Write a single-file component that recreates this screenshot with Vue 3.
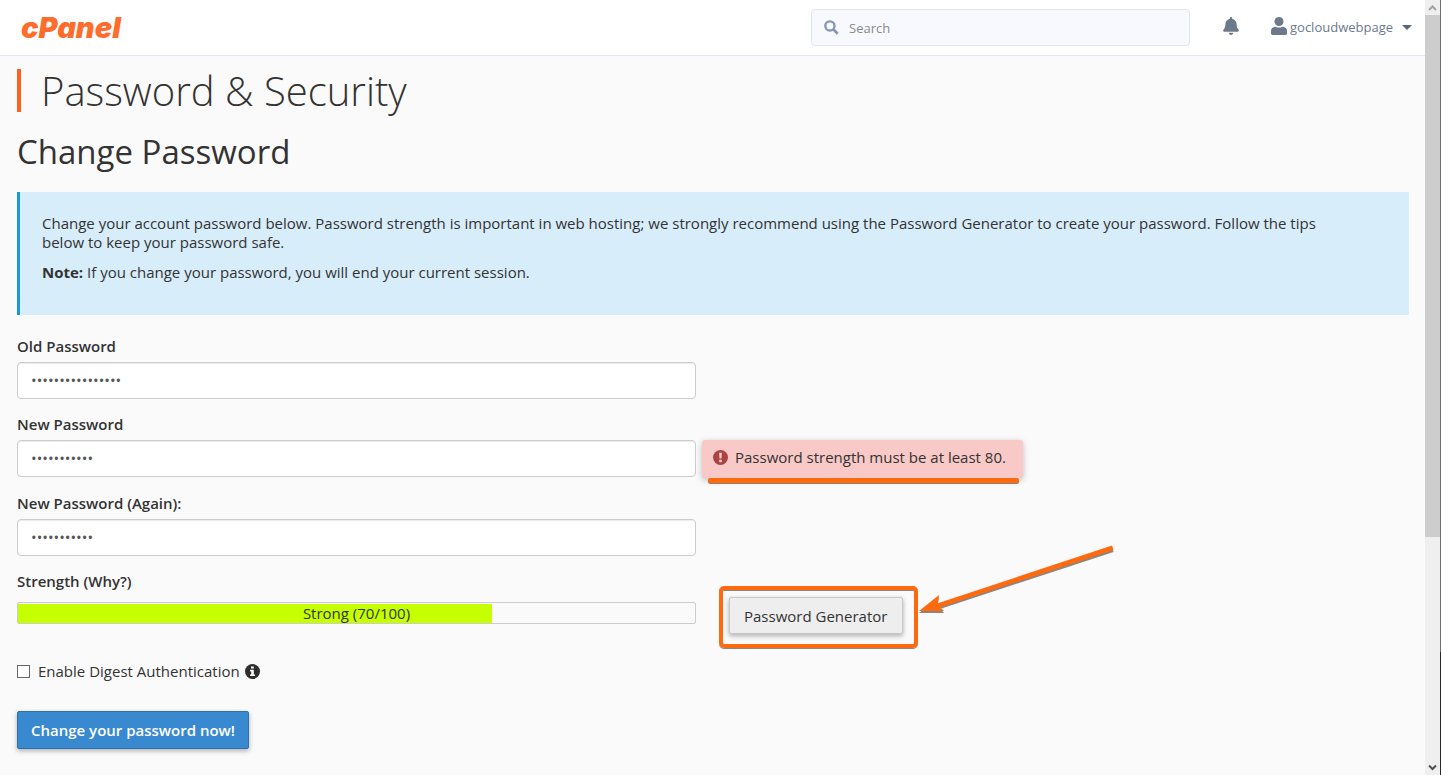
<script setup>
import { ref } from 'vue'

const search = ref('')
const oldPassword = ref('correcthorse1234')
const newPassword = ref('battery2024')
const confirmPassword = ref('battery2024')
const digest = ref(false)
const strength = ref(70)
</script>

<template>
  <div class="window">
    <div class="page">
      <header class="topbar">
        <a class="logo" href="#" aria-label="cPanel home">cPanel</a>
        <div class="search">
          <svg class="search-icon" viewBox="0 0 16 16" aria-hidden="true">
            <circle cx="6.3" cy="6.3" r="4.9" fill="none" stroke="currentColor" stroke-width="2.5" />
            <path d="M10 10l4.6 4.6" stroke="currentColor" stroke-width="3" />
          </svg>
          <input v-model="search" type="text" placeholder="Search" aria-label="Search" />
        </div>
        <button class="icon-button bell" type="button" aria-label="Notifications">
          <svg viewBox="0 0 448 512" width="16" height="18" aria-hidden="true">
            <path fill="currentColor" d="M224 512c35.3 0 64-28.600 64-64H160c0 35.400 28.700 64 64 64zm215.400-149.700c-19.300-20.800-55.500-52-55.500-154.300 0-77.700-54.500-139.900-127.900-155.200V32c0-17.700-14.300-32-32-32s-32 14.300-32 32v20.800C118.600 68.100 64.100 130.300 64.100 208c0 102.300-36.200 133.500-55.500 154.300C2.600 368.700 0 376.400 0 384c.1 16.400 13 32 32.100 32h383.800c19.100 0 32-15.600 32.100-32 0-7.600-2.700-15.300-8.600-21.700z" />
          </svg>
        </button>
        <button class="icon-button user" type="button">
          <svg viewBox="0 0 16 18" width="16" height="18" aria-hidden="true">
            <ellipse cx="8" cy="4.500" rx="4.500" ry="4.500" fill="currentColor" />
            <path fill="currentColor" d="M4.500 9.700Q8 11.500 11.500 9.700C14.500 9.900 16 11.500 16 14v2.600Q16 18 14.600 18H1.400Q0 18 0 16.600V14C0 11.500 1.500 9.900 4.500 9.700z" />
          </svg>
          <span>gocloudwebpage</span>
          <i class="caret"></i>
        </button>
      </header>

      <main class="content">
        <h1>Password &amp; Security</h1>
        <h2>Change Password</h2>

        <section class="callout">
          <p>
            Change your account password below. Password strength is important in web hosting; we strongly
            recommend using the Password Generator to create your password. Follow the tips below to keep your
            password safe.
          </p>
          <p><strong>Note:</strong> If you change your password, you will end your current session.</p>
        </section>

        <form @submit.prevent>
          <div class="group">
            <label for="old">Old Password</label>
            <div class="row">
              <input id="old" v-model="oldPassword" class="field" type="password" />
            </div>
          </div>
          <div class="group">
            <label for="new">New Password</label>
            <div class="row">
              <input id="new" v-model="newPassword" class="field" type="password" />
              <div class="error" role="alert">
                <svg viewBox="0 0 15 15" width="15" height="15" aria-hidden="true">
                  <circle cx="7.500" cy="7.500" r="7.500" fill="#a94442" />
                  <path d="M6.100 2.800h2.800l-.4 5.800h-2z" fill="#f8c9c6" />
                  <rect x="6.200" y="9.700" width="2.600" height="2.500" fill="#f8c9c6" />
                </svg>
                <span>Password strength must be at least 80.</span>
                <i class="underline"></i>
              </div>
            </div>
          </div>
          <div class="group">
            <label for="again">New Password (Again):</label>
            <div class="row">
              <input id="again" v-model="confirmPassword" class="field" type="password" />
            </div>
          </div>
          <div class="row strength">
            <div>
              <div class="label">Strength (Why?)</div>
              <div class="meter" role="progressbar" :aria-valuenow="strength" aria-valuemin="0" aria-valuemax="100">
                <div class="meter-fill" :style="{ width: strength + '%' }"></div>
                <span class="meter-text">Strong ({{ strength }}/100)</span>
              </div>
            </div>
            <div class="highlight">
              <button class="generator" type="button">Password Generator</button>
              <svg class="arrow" viewBox="0 0 196 72" width="196" height="72" aria-hidden="true">
                <g fill="#8a8580" transform="translate(0 1)">
                  <path d="M20 58.500L193 1.500l1.500 4.500L21 63z" />
                  <path d="M0 67l20-16-1.500 9 6.500 7z" />
                </g>
                <g fill="#ff6a0f">
                  <path d="M18 58.500L193 0.500l1.500 4.500L19 63z" />
                  <path d="M0 66l20-16-1.500 10 6.500 6z" />
                </g>
              </svg>
            </div>
          </div>

          <div class="check">
            <input id="digest" v-model="digest" type="checkbox" />
            <label for="digest">Enable Digest Authentication</label>
            <svg viewBox="0 0 15 15" width="15" height="15" aria-hidden="true">
              <circle cx="7.500" cy="7.500" r="7.500" fill="#2e2e2e" />
              <path d="M6 2.600h2.800v2H6zM5 5.700h3.800v4.700h1.200v1.700H5v-1.700h1.200V7.400H5z" fill="#fafafa" />
            </svg>
          </div>

          <button class="submit" type="submit">Change your password now!</button>
        </form>
      </main>
    </div>

    <div class="scrollbar" aria-hidden="true">
      <svg viewBox="0 0 15 15"><path d="M4 10l3.500-3.500L11 10" fill="none" stroke="#a3a3a3" stroke-width="2" /></svg>
      <div class="thumb"></div>
      <div class="track"></div>
      <svg viewBox="0 0 15 15"><path d="M4 5.500L7.500 9 11 5.500" fill="none" stroke="#505050" stroke-width="2" /></svg>
    </div>
  </div>
</template>

<style>
body {
  margin: 0;
  background: #fafafa;
}
</style>

<style scoped>
* {
  box-sizing: border-box;
}

.window {
  display: flex;
  min-height: 100vh;
  padding: 0 1px 1px 0;
  background:
    linear-gradient(#6e6e6e 84%, #26282f 84%) right / 1px 100% no-repeat,
    linear-gradient(90deg, #707070 47%, #2a1214 47%) bottom / 100% 1px no-repeat,
    #fafafa;
  font-family: "Open Sans", sans-serif;
  font-size: 15px;
  line-height: 19px;
  color: #333;
}

.page {
  flex: 1;
  min-width: 0;
}

.topbar {
  display: flex;
  align-items: center;
  height: 56px;
  padding: 0 13px 0 21px;
  background: #fff;
  border-bottom: 1px solid #e4e6f1;
}

.logo {
  margin-right: auto;
  font-family: Inter, sans-serif;
  font-size: 29px;
  font-style: italic;
  font-weight: 900;
  line-height: 32px;
  color: #ff6c2c;
  text-decoration: none;
}

.search {
  display: flex;
  align-items: center;
  gap: 10px;
  width: 379px;
  height: 37px;
  padding: 0 12px;
  background: #f8f9fe;
  border: 1px solid #e3e6f1;
  border-radius: 4px;
}

.search-icon {
  flex: none;
  width: 15px;
  height: 15px;
  color: #8695b2;
}

.search input {
  flex: 1;
  min-width: 0;
  padding: 1px 0 0;
  border: 0;
  outline: 0;
  background: none;
  font: inherit;
  font-size: 13px;
  color: #333;
}

.search input::placeholder {
  color: #8a8a8a;
}

.icon-button {
  display: flex;
  align-items: center;
  padding: 0 0 3px;
  border: 0;
  background: none;
  font: inherit;
  font-size: 13px;
  color: #6c7a8c;
}

.icon-button span,
.caret {
  margin-top: 3px;
}

.bell {
  margin: 0 32px 0 33px;
}

.user span {
  margin-left: 3px;
  margin-right: 9px;
}

.caret {
  border: 5px solid transparent;
  border-top: 5px solid #56677c;
  border-bottom: 0;
}

.content {
  padding: 13px 16px 26px 17px;
}

h1 {
  margin: 0;
  padding-left: 20px;
  border-left: 4px solid #ff5f1f;
  font-size: 40px;
  font-weight: 300;
  line-height: 43px;
}

h2 {
  margin: 20px 0;
  font-size: 33px;
  font-weight: 400;
  line-height: 40px;
}

.callout {
  padding: 22px 56px 22px 22px;
  border-left: 3px solid #179bd7;
  background: #d7edfa;
}

.callout p {
  margin: 0 0 11px;
}

form {
  margin-top: 22px;
}

.group {
  margin-bottom: 16px;
}

.group label,
.label {
  display: block;
  margin-bottom: 6px;
  font-weight: 600;
}

.row {
  display: grid;
  grid-template-columns: calc(50% - 17px) 1fr;
  column-gap: 6px;
  align-items: start;
}

.field {
  width: 100%;
  height: 37px;
  padding: 0 13px 2px;
  border: 1px solid #ccc;
  border-radius: 4px;
  background: #fff;
  box-shadow: inset 0 1px 1px rgba(0, 0, 0, 0.08);
  font: inherit;
  color: #555;
}

.error {
  position: relative;
  display: flex;
  align-items: center;
  justify-self: start;
  gap: 7px;
  height: 38px;
  padding: 0 17px 3px 11px;
  border-radius: 3px;
  background: #f8c9c6;
  box-shadow: 0 2px 6px rgba(0, 0, 0, 0.25);
}

.underline {
  position: absolute;
  left: 6px;
  right: 4px;
  bottom: -5px;
  height: 5px;
  border-radius: 2px;
  background: #ff6a0f;
  box-shadow: 0 1px 0 #98806e;
}

.strength .label {
  margin-bottom: 11px;
}

.meter {
  position: relative;
  height: 22px;
  padding: 1px 0 0;
  border: 1px solid #ccc;
  border-radius: 2px;
  background: #fafafa;
  text-align: center;
}

.meter-fill {
  height: 100%;
  background: #c6ff00;
}

.meter-text {
  position: absolute;
  inset: 1px 0 0;
}

.highlight {
  position: relative;
  justify-self: start;
  margin: 14px 0 0 17px;
  padding: 7px 11px 10px 6px;
  border: 4px solid #ff6a0f;
  border-radius: 5px;
  box-shadow: 0 1px 0 #8a8580, inset 0 1px 0 #8a8580;
}

.generator {
  display: block;
  height: 37px;
  padding: 2px 15px 0 14px;
  border: 1px solid #c8c8c8;
  border-radius: 2px;
  background: #eee;
  box-shadow: 0 2px 5px rgba(0, 0, 0, 0.3);
  font: inherit;
  color: #333;
}

.arrow {
  position: absolute;
  top: -45px;
  left: 196px;
}

.check {
  display: flex;
  align-items: center;
  margin-top: 14px;
}

.check input {
  appearance: none;
  width: 13px;
  height: 13px;
  margin: 0 8px 0 0;
  border: 1px solid #666;
  background: #fff;
}

.check svg {
  margin-left: 5px;
}

.submit {
  display: block;
  height: 38px;
  margin-top: 30px;
  padding: 0 13px;
  border: 1px solid #2f6fae;
  border-radius: 2px;
  background: #3889cf;
  box-shadow: 0 2px 5px rgba(0, 0, 0, 0.3);
  font: inherit;
  font-weight: 600;
  color: #fff;
}

.scrollbar {
  display: flex;
  flex-direction: column;
  width: 15px;
  background: #efefef;
}

.scrollbar svg {
  display: block;
  flex: none;
  width: 15px;
  height: 15px;
}

.thumb {
  flex: 70;
  background: #cdcdcd;
}

.track {
  flex: 30;
}
</style>
